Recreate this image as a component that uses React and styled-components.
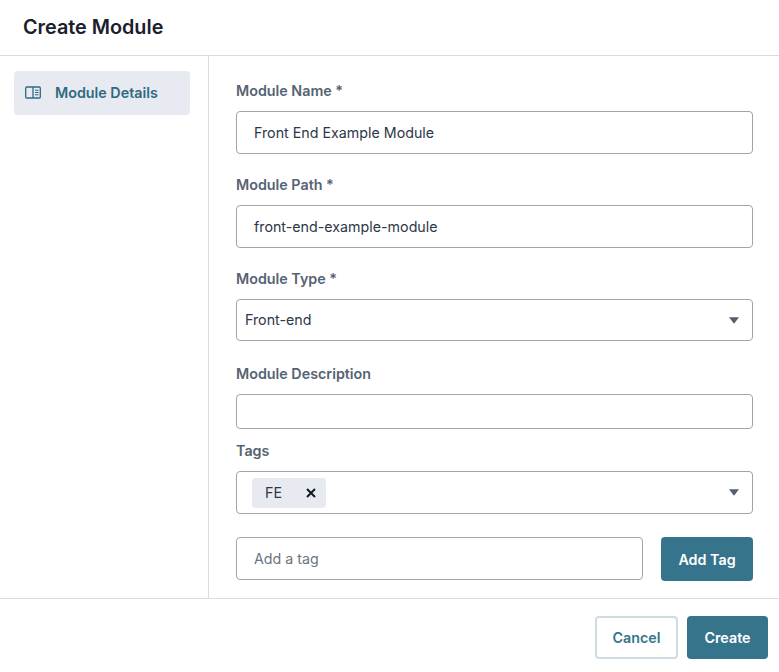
import React from "react";
import styled, { createGlobalStyle } from "styled-components";

const GlobalStyle = createGlobalStyle`
  html, body {
    margin: 0;
    padding: 0;
    background: #fff;
    font-family: Inter, "Liberation Sans", sans-serif;
  }
  * {
    box-sizing: border-box;
  }
`;

const Caret = () => (
  <CaretIcon width="10" height="7" viewBox="0 0 10 7">
    <path d="M0 0.2h10L5 6.8z" fill="#545f6d" />
  </CaretIcon>
);

const PanelIcon = () => (
  <svg width="16" height="13" viewBox="0 0 16 13" fill="none" stroke="#2f6a80" strokeWidth="1.3">
    <rect x="0.7" y="1" width="14.6" height="11" rx="1" />
    <path d="M8 1v11" />
    <path d="M10 4.2h3.5M10 6.5h3.5M10 8.8h3.5" strokeWidth="1.1" />
  </svg>
);

const App = () => {
  return (
    <Page>
      <GlobalStyle />
      <Header>
        <Title>Create Module</Title>
      </Header>
      <Body>
        <Sidebar>
          <NavItem>
            <PanelIcon />
            Module Details
          </NavItem>
        </Sidebar>
        <Form>
          <Field>
            <Label>Module Name *</Label>
            <Input defaultValue="Front End Example Module" />
          </Field>
          <Field>
            <Label>Module Path *</Label>
            <Input defaultValue="front-end-example-module" />
          </Field>
          <Field $gap={23}>
            <Label>Module Type *</Label>
            <SelectBox>
              <SelectText>Front-end</SelectText>
              <Caret />
            </SelectBox>
          </Field>
          <Field $gap={12}>
            <Label>Module Description</Label>
            <Input $short />
          </Field>
          <Field $gap={23}>
            <Label>Tags</Label>
            <TagBox>
              <Tag>
                FE
                <TagRemove viewBox="0 0 10 10" width="10" height="10">
                  <path d="M1 1l8 8M9 1l-8 8" stroke="#14181f" strokeWidth="2" />
                </TagRemove>
              </Tag>
              <Caret />
            </TagBox>
          </Field>
          <AddTagRow>
            <Input placeholder="Add a tag" />
            <PrimaryButton $wide>Add Tag</PrimaryButton>
          </AddTagRow>
        </Form>
      </Body>
      <Footer>
        <CancelButton>Cancel</CancelButton>
        <PrimaryButton>Create</PrimaryButton>
      </Footer>
    </Page>
  );
};
export default App;

const Page = styled.div`
  width: 779px;
  height: 672px;
  display: flex;
  flex-direction: column;
  overflow: hidden;
  background: #fff;
`;
const Header = styled.header`
  height: 56px;
  display: flex;
  align-items: center;
  padding: 0 23px 2px;
  border-bottom: 1px solid #d9dde1;
`;
const Title = styled.h1`
  margin: 0;
  font-size: 19.8px;
  font-weight: 600;
  color: #1a202c;
`;
const Body = styled.div`
  height: 543px;
  display: flex;
  border-bottom: 1px solid #d9dde1;
`;
const Sidebar = styled.aside`
  width: 209px;
  padding: 15px 18px 0 14px;
  border-right: 1px solid #d9dde1;
`;
const NavItem = styled.div`
  height: 44px;
  display: flex;
  align-items: center;
  gap: 14px;
  padding: 0 0 2px 11px;
  border-radius: 4px;
  background: #e7ebf1;
  color: #2f6a80;
  font-size: 14.3px;
  font-weight: 600;
`;
const Form = styled.div`
  flex: 1;
  padding: 25px 26px 0 27px;
`;
const Field = styled.div`
  margin-bottom: ${(p) => p.$gap ?? 21}px;
`;
const Label = styled.div`
  height: 20px;
  margin-bottom: 10px;
  font-size: 14.3px;
  line-height: 20px;
  font-weight: 600;
  color: #566373;
`;
const Input = styled.input`
  display: block;
  flex: 1;
  width: 100%;
  height: ${(p) => (p.$short ? "35px" : "43px")};
  padding: 0 17px;
  border: 1px solid #a0a5ab;
  border-radius: 4px;
  outline: none;
  background: #fff;
  font-family: inherit;
  font-size: 14.25px;
  color: #2d3748;
  &::placeholder {
    color: #6b7480;
    opacity: 1;
  }
`;
const SelectBox = styled.div`
  height: 42px;
  display: flex;
  align-items: center;
  justify-content: space-between;
  padding: 0 13px 0 8px;
  border: 1px solid #a0a5ab;
  border-radius: 4px;
  font-size: 14.25px;
  color: #2d3748;
`;
const SelectText = styled.span`
  margin-bottom: 2px;
`;
const CaretIcon = styled.svg`
  flex-shrink: 0;
`;
const TagBox = styled(SelectBox)`
  height: 43px;
  padding-left: 15px;
`;
const Tag = styled.div`
  width: 74px;
  height: 30px;
  display: flex;
  align-items: center;
  justify-content: space-between;
  padding: 0 10px 0 13px;
  border-radius: 4px;
  background: #e7ebf1;
  font-size: 14.25px;
  color: #2d3748;
`;
const TagRemove = styled.svg`
  display: block;
`;
const AddTagRow = styled.div`
  display: flex;
  gap: 18px;
`;
const PrimaryButton = styled.button`
  flex-shrink: 0;
  width: ${(p) => (p.$wide ? "92px" : "81px")};
  height: ${(p) => (p.$wide ? "44px" : "43px")};
  border: none;
  border-radius: 4px;
  background: #36748c;
  color: #fff;
  font-family: inherit;
  font-size: 14.3px;
  font-weight: 600;
`;
const Footer = styled.footer`
  flex: 1;
  display: flex;
  justify-content: flex-end;
  gap: 9px;
  padding: 17px 11px 0 0;
`;
const CancelButton = styled.button`
  width: 83px;
  height: 43px;
  border: 2px solid #cfdde3;
  border-radius: 4px;
  background: #fff;
  color: #36748c;
  font-family: inherit;
  font-size: 14.3px;
  font-weight: 600;
`;
